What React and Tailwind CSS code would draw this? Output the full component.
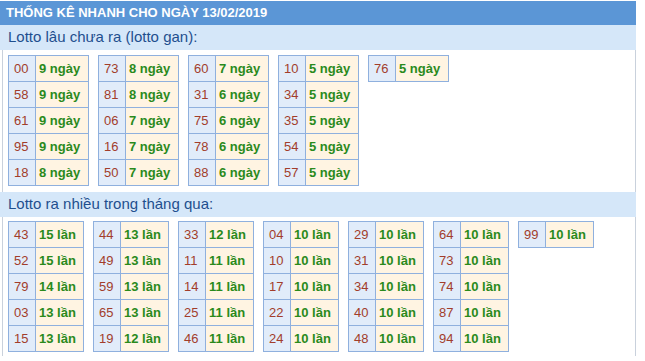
import React from 'react';

const ganCols = [
  [['00', 9], ['58', 9], ['61', 9], ['95', 9], ['18', 8]],
  [['73', 8], ['81', 8], ['06', 7], ['16', 7], ['50', 7]],
  [['60', 7], ['31', 6], ['75', 6], ['78', 6], ['88', 6]],
  [['10', 5], ['34', 5], ['35', 5], ['54', 5], ['57', 5]],
  [['76', 5]],
];

const nhieuCols = [
  [['43', 15], ['52', 15], ['79', 14], ['03', 13], ['15', 13]],
  [['44', 13], ['49', 13], ['59', 13], ['65', 13], ['19', 12]],
  [['33', 12], ['11', 11], ['14', 11], ['25', 11], ['46', 11]],
  [['04', 10], ['10', 10], ['17', 10], ['22', 10], ['24', 10]],
  [['29', 10], ['31', 10], ['34', 10], ['40', 10], ['48', 10]],
  [['64', 10], ['73', 10], ['74', 10], ['87', 10], ['94', 10]],
  [['99', 10]],
];

const LottoTable = ({ rows, unit, wide }) => (
  <div className="flex flex-col border-t border-l border-[#8fb0de]">
    {rows.map(([num, count]) => (
      <div key={num} className="flex h-[26px]">
        <div className="w-[27px] h-full flex items-center pl-[5px] bg-[#e1ecfa] text-[#a23d2b] border-r border-b border-[#8fb0de]">
          {num}
        </div>
        <div
          className={`${wide ? 'w-[53px]' : 'w-[48px]'} h-full flex items-center pl-[3px] bg-[#fff4e2] text-[#2a8a1c] font-bold border-r border-b border-[#8fb0de]`}
        >
          {count} {unit}
        </div>
      </div>
    ))}
  </div>
);

const Band = ({ children }) => (
  <div className="h-[25px] flex items-center pl-[8px] bg-[#d5e7f9] text-[#1f4f8e] text-[15px]">
    {children}
  </div>
);

export default function App() {
  return (
    <div
      className="w-[636px] pt-px bg-white"
      style={{ fontFamily: '"Liberation Sans", Arial, sans-serif' }}
    >
      <div className="h-[24px] flex items-center pl-[6px] bg-[#5b96d6] text-white font-bold text-[13px]">
        THỐNG KÊ NHANH CHO NGÀY 13/02/2019
      </div>
      <Band>Lotto lâu chưa ra (lotto gan):</Band>
      <div className="ml-[2px] w-[634px] border-l border-r border-[#c9d1dc] pl-[5px] pt-[5px] pb-[6px] flex items-start gap-[9px] text-[13px]">
        {ganCols.map((rows, i) => (
          <LottoTable key={i} rows={rows} unit="ngày" wide />
        ))}
      </div>
      <Band>Lotto ra nhiều trong tháng qua:</Band>
      <div className="ml-[2px] w-[634px] border-l border-r border-[#c9d1dc] pl-[5px] pt-[4px] pb-[4px] flex items-start gap-[9px] text-[13px]">
        {nhieuCols.map((rows, i) => (
          <LottoTable key={i} rows={rows} unit="lần" />
        ))}
      </div>
    </div>
  );
}
